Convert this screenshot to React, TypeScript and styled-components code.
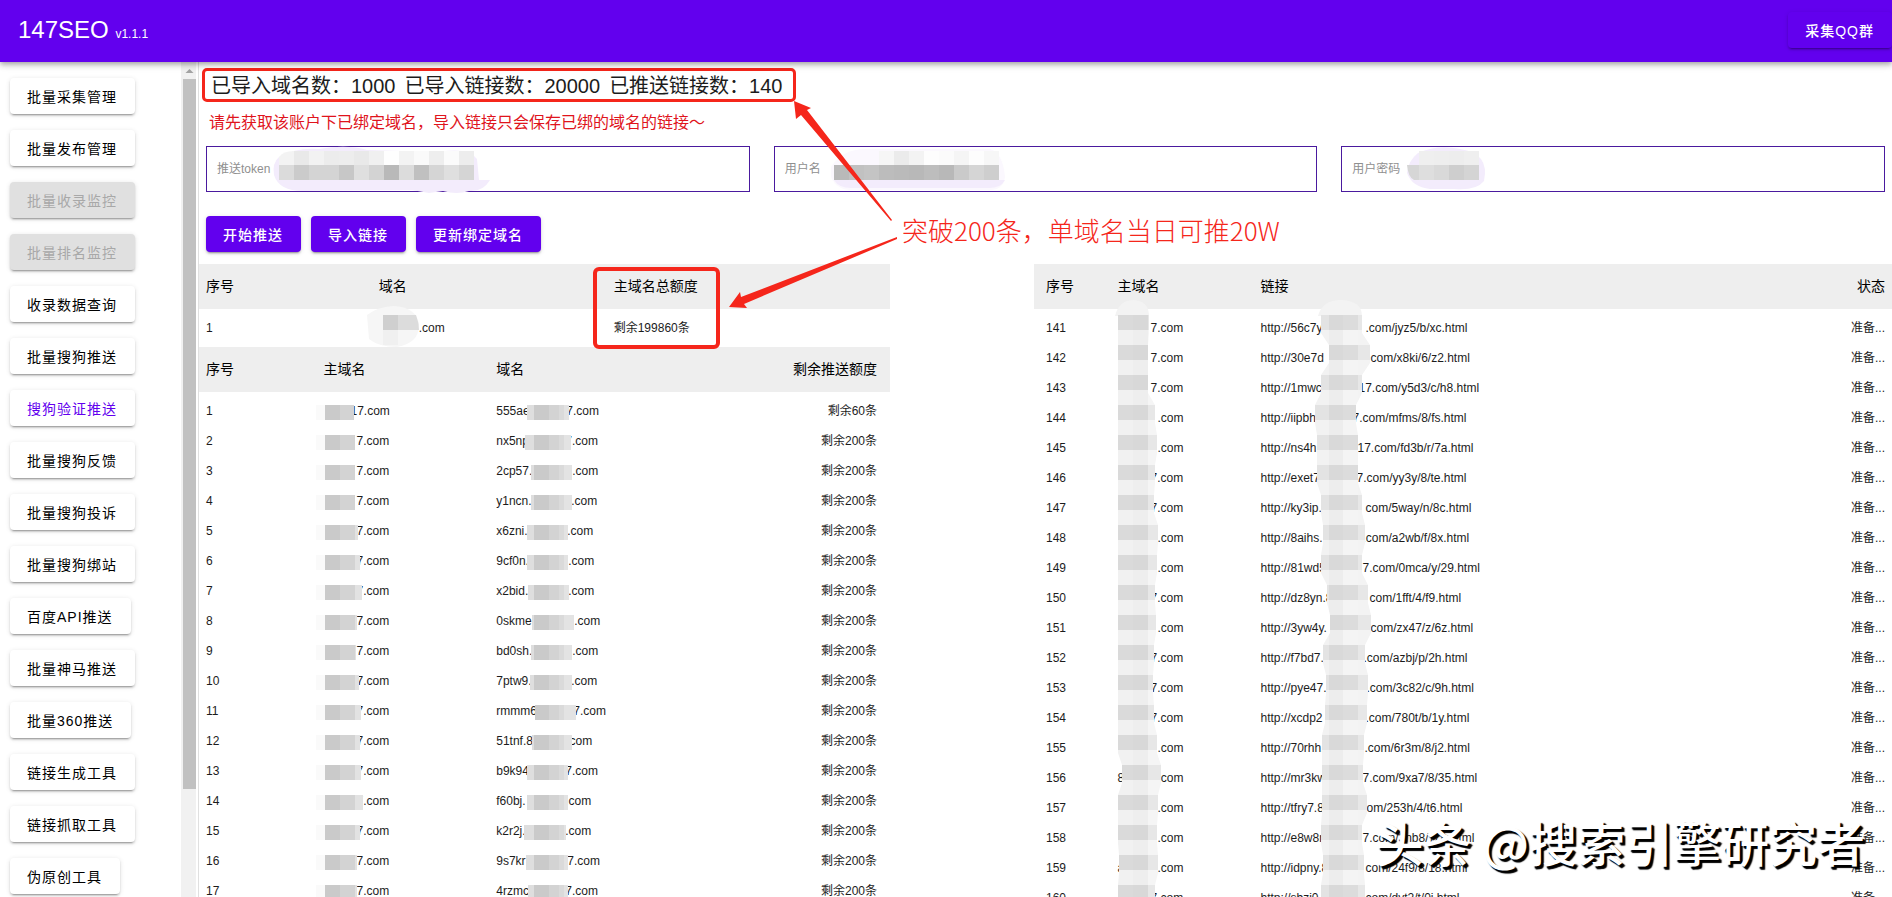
import React from 'react';
import styled, { createGlobalStyle, css } from 'styled-components';

const purple = '#6200ee';
const red = '#f5261b';
const raised =
  '0 3px 1px -2px rgba(0,0,0,.2), 0 2px 2px 0 rgba(0,0,0,.14), 0 1px 5px 0 rgba(0,0,0,.12)';

const GlobalStyle = createGlobalStyle`
  *, *::before, *::after { box-sizing: border-box; }
  body {
    margin: 0;
    background: #fff;
    color: #1c1c1c;
    font-family: "Liberation Sans", "Noto Sans CJK SC", sans-serif;
    font-size: 12px;
  }
  button, input { font-family: inherit; }
`;

const Page = styled.div`
  display: flex;
  flex-direction: column;
  height: 100vh;
  overflow: hidden;
  position: relative;
`;

const TopBar = styled.header`
  display: flex;
  align-items: center;
  justify-content: space-between;
  flex: none;
  height: 62px;
  padding: 0 0 2px 18px;
  background: ${purple};
  color: #fff;
  box-shadow: 0 2px 4px -1px rgba(0,0,0,.2), 0 4px 5px 0 rgba(0,0,0,.14), 0 1px 10px 0 rgba(0,0,0,.12);
  z-index: 3;
`;

const Brand = styled.h1`
  margin: 0;
  padding-top: 4px;
  font-size: 24px;
  font-weight: 400;
  line-height: 32px;
  small { font-size: 12px; }
`;

const Button = styled.button<{ $kind?: 'primary' | 'plain'; $active?: boolean }>`
  height: 36px;
  padding: 0 18px 1px 17px;
  border: 0;
  border-radius: 4px;
  font-size: 14px;
  letter-spacing: 1px;
  white-space: nowrap;
  background: #fff;
  color: ${(p) => (p.$active ? purple : '#000')};
  box-shadow: ${raised};
  ${(p) =>
    p.$kind === 'primary' &&
    css`
      background: ${purple};
      color: #fff;
      font-weight: 500;
    `}
  &:disabled {
    background: #e0e0e0;
    color: #a8a8a8;
  }
`;

const Body = styled.div`
  display: flex;
  flex: 1;
  min-height: 0;
`;

const Sidebar = styled.nav`
  display: flex;
  flex-direction: column;
  align-items: flex-start;
  gap: 16px;
  flex: 0 0 181px;
  padding: 16px 10px 0;
  overflow: hidden;
  ${Button} { flex: none; }
`;

const ScrollTrack = styled.div`
  display: flex;
  flex-direction: column;
  flex: 0 0 15px;
  padding-left: 2px;
  background: #f1f1f1;
`;

const ScrollArrow = styled.svg`
  flex: none;
  width: 13px;
  height: 17px;
`;

const ScrollThumb = styled.div`
  height: 85%;
  background: #c1c1c1;
`;

const Content = styled.main`
  position: relative;
  flex: 1;
  min-width: 0;
  margin-left: 2px;
  border-left: 1px solid #e0e0e0;
  overflow: hidden;
`;

const Stats = styled.h2`
  display: flex;
  gap: 9px;
  width: fit-content;
  height: 34px;
  margin: 6px 3px 7px;
  padding: 0 10px 0 6px;
  border: 3px solid ${red};
  border-radius: 5px;
  font-size: 20px;
  font-weight: 400;
  line-height: 30px;
  white-space: nowrap;
`;

const Notice = styled.p`
  margin: 0 10px 11px;
  padding-top: 2px;
  color: #e0141c;
  font-size: 16px;
  line-height: 24px;
`;

const Fields = styled.form`
  display: grid;
  grid-template-columns: repeat(3, 1fr);
  gap: 24px;
  padding: 0 7px;
`;

const Field = styled.label`
  position: relative;
  display: flex;
  align-items: center;
  gap: 8px;
  height: 46px;
  padding: 0 10px 4px;
  border: 1px solid #4a1a9e;
  color: #8f8f8f;
  white-space: nowrap;
  input {
    flex: 1;
    min-width: 0;
    border: 0;
    outline: 0;
    background: transparent;
    font-size: 12px;
  }
`;

const Actions = styled.div`
  display: flex;
  gap: 10px;
  padding: 24px 7px 12px;
`;

const Panels = styled.div`
  display: flex;
  align-items: flex-start;
`;

const QuotaPanel = styled.section`
  flex: 691;
  min-width: 0;
  margin-right: 144px;
`;

const LinkPanel = styled.section`
  flex: 858;
  min-width: 0;
`;

const Table = styled.table<{ $pad: number; $endPad: number }>`
  width: 100%;
  table-layout: fixed;
  border-collapse: collapse;
  th, td {
    padding: 0 0 0 ${(p) => p.$pad}px;
    text-align: left;
    white-space: nowrap;
  }
  th {
    height: 45px;
    padding-bottom: 4px;
    background: #eee;
    color: #000;
    font-size: 14px;
    font-weight: 400;
  }
  td { height: 30px; line-height: 30px; }
  tbody tr:first-child td { height: 34px; padding-top: 4px; }
  tbody tr:last-child td { padding-bottom: 4px; }
  .end { padding-right: ${(p) => p.$endPad}px; text-align: right; }
`;

const Redacted = styled.span`
  position: relative;
  display: flex;
  height: 30px;
`;

const Head = styled.span<{ $w: number }>`
  flex: none;
  width: ${(p) => p.$w}px;
`;

const Mask = styled.span<{ $from: number; $to: number; $tone: 'root' | 'sub' }>`
  position: absolute;
  top: 9px;
  left: ${(p) => p.$from}px;
  width: ${(p) => p.$to - p.$from}px;
  height: 15px;
  background-image: ${(p) =>
    p.$tone === 'root'
      ? 'linear-gradient(90deg, #cacaca 0 17px, #d3d3d3 17px 32px, #e2e2e2 32px)'
      : 'linear-gradient(90deg, #dedede 0 38px, #cacaca 38px 53px, #d3d3d3 53px 63px, #dadada 63px 68px, #e3e3e3 68px)'};
  background-size: 100px 15px;
  background-position: -${(p) => p.$from}px 0;
  ${(p) =>
    p.$tone === 'root' &&
    css`
      &::before {
        content: '';
        position: absolute;
        right: 100%;
        width: 9px;
        height: 15px;
        background: #fafafa;
      }
    `}
`;

const Blur = styled.svg`
  position: absolute;
  top: 0;
  left: 0;
  z-index: 1;
  overflow: visible;
  pointer-events: none;
`;

const Marks = styled.svg`
  position: absolute;
  top: 0;
  left: 0;
  z-index: 2;
  overflow: visible;
  pointer-events: none;
`;

const Callout = styled.p`
  position: absolute;
  top: 150px;
  left: 703px;
  z-index: 2;
  margin: 0;
  color: ${red};
  font-family: "Noto Sans CJK SC", sans-serif;
  font-size: 26px;
  font-weight: 300;
  line-height: 36px;
  white-space: nowrap;
`;

const Watermark = styled.div`
  position: absolute;
  right: 27px;
  bottom: 24px;
  z-index: 4;
  color: #fff;
  font-family: "Noto Sans CJK SC", sans-serif;
  font-size: 48px;
  font-weight: 500;
  line-height: 64px;
  white-space: nowrap;
  text-shadow: 2px 2px 1px #000, 3px 3px 1px #000;
`;

type NavItem = { label: string; state?: 'active' | 'disabled' };
const nav: NavItem[] = [
  { label: '批量采集管理' },
  { label: '批量发布管理' },
  { label: '批量收录监控', state: 'disabled' },
  { label: '批量排名监控', state: 'disabled' },
  { label: '收录数据查询' },
  { label: '批量搜狗推送' },
  { label: '搜狗验证推送', state: 'active' },
  { label: '批量搜狗反馈' },
  { label: '批量搜狗投诉' },
  { label: '批量搜狗绑站' },
  { label: '百度API推送' },
  { label: '批量神马推送' },
  { label: '批量360推送' },
  { label: '链接生成工具' },
  { label: '链接抓取工具' },
  { label: '伪原创工具' },
];

/* head, tail, tail start, mask start, mask end, root mask end */
type DomainRow = [string, string, number, number, number, number];
const domains: DomainRow[] = [
  ['555ae', '7.com', 70, 31, 73, 31],
  ['nx5np', '7.com', 69, 29, 75, 32],
  ['2cp57.', '.com', 76, 35, 76, 32],
  ['y1ncn.', '.com', 75, 35, 76, 32],
  ['x6zni.', '.com', 71, 31, 72, 35],
  ['9cf0n.', '.com', 72, 31, 72, 37],
  ['x2bid.', '.com', 72, 32, 73, 39],
  ['0skme', '.com', 78, 36, 78, 34],
  ['bd0sh.', '.com', 76, 35, 76, 33],
  ['7ptw9.', '.com', 75, 34, 76, 36],
  ['rmmm6', '7.com', 77, 39, 80, 38],
  ['51tnf.8', '.com', 70, 36, 76, 37],
  ['b9k94', '7.com', 69, 31, 72, 38],
  ['f60bj.', '.com', 69, 31, 72, 40],
  ['k2r2j.', '.com', 69, 28, 70, 37],
  ['9s7kr', '7.com', 71, 30, 72, 34],
  ['4rzmc', '7.com', 69, 32, 72, 34],
];

/* root head, root tail, link head, link tail, link tail start */
type LinkRow = [string, string, string, string, number];
const links: LinkRow[] = [
  ['', '7.com', 'http://56c7y.', '.com/jyz5/b/xc.html', 105],
  ['', '7.com', 'http://30e7d', 'com/x8ki/6/z2.html', 110],
  ['', '7.com', 'http://1mwc', '17.com/y5d3/c/h8.html', 98],
  ['', '.com', 'http://iipbh', '7.com/mfms/8/fs.html', 92],
  ['', '.com', 'http://ns4h', '17.com/fd3b/r/7a.html', 97],
  ['', '7.com', 'http://exet7', '7.com/yy3y/8/te.html', 96],
  ['', '7.com', 'http://ky3ip.8', 'com/5way/n/8c.html', 105],
  ['', '.com', 'http://8aihs.', '.com/a2wb/f/8x.html', 102],
  ['', '.com', 'http://81wd5', '7.com/0mca/y/29.html', 102],
  ['', '7.com', 'http://dz8yn.8', 'com/1fft/4/f9.html', 109],
  ['', '.com', 'http://3yw4y.', 'com/zx47/z/6z.html', 110],
  ['', '7.com', 'http://f7bd7.', '.com/azbj/p/2h.html', 103],
  ['', '7.com', 'http://pye47.', '.com/3c82/c/9h.html', 106],
  ['', '7.com', 'http://xcdp2', '.com/780t/b/1y.html', 105],
  ['', '.com', 'http://70rhh.', '.com/6r3m/8/j2.html', 104],
  ['8', '.com', 'http://mr3kw', '7.com/9xa7/8/35.html', 102],
  ['', '.com', 'http://tfry7.8', 'com/253h/4/t6.html', 100],
  ['', '.com', 'http://e8w8n', '7.com/3nb8/7/7r.html', 102],
  ['a', '.com', 'http://idpny.8', 'com/24f9/8/18.html', 105],
  ['', '7.com', 'http://sbzj0.', 'com/dvt2/t/0j.html', 105],
];

/* left and right edge of the blurred strip beside each row */
type Edge = [number, number];
const rootEdges: Edge[] = [
  [1, 32], [1, 31], [1, 31], [1, 38], [1, 40], [1, 38], [1, 37], [1, 41], [1, 40], [1, 38],
  [1, 39], [1, 37], [1, 36], [1, 37], [1, 40], [5, 44], [1, 41], [1, 40], [2, 41], [1, 38],
];
const linkEdges: Edge[] = [
  [61, 102], [69, 110], [61, 102], [55, 96], [57, 98], [57, 98], [61, 102], [63, 105], [61, 102], [67, 108],
  [70, 111], [63, 105], [66, 108], [65, 107], [62, 104], [62, 103], [62, 107], [61, 102], [63, 104], [61, 105],
];

type Strip = { id: string; edges: Edge[]; cuts: number[]; dark: string[]; light: string[] };

function BlurStrip({ id, edges, cuts, dark, light }: Strip) {
  const left = edges.flatMap(([l], i) => [`${l},${i * 30 + 2}`, `${l},${i * 30 + 20}`]);
  const right = edges.flatMap(([, r], i) => [`${r},${i * 30 + 2}`, `${r},${i * 30 + 20}`]);
  const [l0, r0] = edges[0];
  const cap = `M${l0 - 3},3 Q${l0 + 1},-13 ${(l0 + r0) / 2},-13 Q${r0},-12 ${r0},3 Z`;
  const side = `M${left.join(' L')} L${right.reverse().join(' L')} Z`;
  return (
    <Blur width="1" height="1" aria-hidden="true">
      <clipPath id={id}>
        <path d={side} />
      </clipPath>
      <path d={cap} fill="#f3f3f3" />
      <g clipPath={`url(#${id})`}>
        {edges.map((_, row) =>
          dark.map((tone, i) => (
            <g key={`${row}-${i}`}>
              <rect x={cuts[i]} y={row * 30 + 2} width={cuts[i + 1] - cuts[i]} height="15" fill={tone} />
              <rect x={cuts[i]} y={row * 30 + 17} width={cuts[i + 1] - cuts[i]} height="15" fill={light[i]} />
            </g>
          )),
        )}
      </g>
    </Blur>
  );
}

type Cells = { x: number; y: number; tones: string[]; h?: number };
function CellRow({ x, y, tones, h = 15 }: Cells) {
  return (
    <>
      {tones.map((t, i) => (
        <rect key={i} x={x + i * 15} y={y} width="15" height={h} fill={t} />
      ))}
    </>
  );
}

function TokenBlur() {
  return (
    <Blur width="1" height="1" aria-hidden="true">
      <path d="M72 10 Q90 0 112 2 Q140 -3 160 3 L232 5 Q262 0 270 12 L272 33 H283 Q276 45 262 44 Q250 48 236 44 L222 46 L205 43 L96 44 Q72 44 67 28 Q65 16 72 10Z" fill="#f3ecfc" />
      <path d="M72 10 Q76 4 87 4 V19 H72Z" fill="#f3f3f3" />
      <CellRow x={87} y={4} tones={['#e9e9e9', '#f2f2f2', '#ececec', '#ededed', '#e9e9e9', '#f0f0f0', '#fefefe', '#f3f3f3', '#fafafa', '#eeeeee', '#fbfbfb', '#ededed']} />
      <CellRow x={72} y={18} tones={['#dbdbdb', '#cbcbcb', '#d4d4d4', '#d4d4d4', '#c7c7c7', '#dfdfdf', '#d3d3d3', '#b9b9b9', '#dcdcdc', '#c0c0c0', '#d5d5d5', '#dfdfdf', '#d5d5d5']} />
    </Blur>
  );
}

function UserBlur() {
  return (
    <Blur width="1" height="1" aria-hidden="true">
      <path d="M56 20 Q68 2 90 2 H215 Q228 6 230 30 Q228 43 215 43 H76 Q62 43 56 30Z" fill="#fbf8fe" />
      <path d="M59 33 H230 Q226 41 214 41 H76 Q64 41 59 33Z" fill="#f3ecfc" />
      <CellRow x={104} y={4} tones={['#f6f6f6', '#ebebeb', '#f3f3f3', '#fdfdfd', '#fbfbfb', '#f5f5f5', '#fdfdfd', '#f7f7f7']} />
      <CellRow x={59} y={18} tones={['#b9b9b9', '#c1c1c1', '#c4c4c4', '#bcbcbc', '#bababa', '#b8b8b8', '#bdbdbd', '#b8b8b8', '#cacaca', '#d5d5d5', '#cecece']} />
    </Blur>
  );
}

function PasswordBlur() {
  return (
    <Blur width="1" height="1" aria-hidden="true">
      <path d="M76 6 Q96 -3 118 2 Q148 6 142 34 Q134 44 112 42 H88 Q70 40 65 26 Q66 14 76 6Z" fill="#f3ecfc" />
      <CellRow x={77} y={4} tones={['#efefef', '#eeeeee', '#ededed', '#efefef']} />
      <path d="M65 18 H77 V33 H72 Q66 30 65 18Z" fill="#d6d6d6" />
      <CellRow x={77} y={18} tones={['#dedede', '#d9d9d9', '#cecece', '#d4d4d4']} />
    </Blur>
  );
}

function RootDomainBlur() {
  return (
    <Blur width="1" height="1" aria-hidden="true">
      <path d="M-12 2 Q-2 -6 14 -7 Q38 -6 40 12 Q40 30 18 34 Q0 34 -10 26Z" fill="#f6f6f6" />
      <rect x="4" y="2" width="15" height="15" fill="#cfcfcf" />
      <path d="M19 2 H37 Q40 10 40 17 H19Z" fill="#dcdcdc" />
      <rect x="4" y="17" width="15" height="15" fill="#f0f0f0" />
    </Blur>
  );
}

const fields = [
  { id: 'token', label: '推送token', type: 'text', blur: <TokenBlur /> },
  { id: 'user', label: '用户名', type: 'text', blur: <UserBlur /> },
  { id: 'password', label: '用户密码', type: 'password', blur: <PasswordBlur /> },
];

export default function App() {
  return (
    <Page>
      <GlobalStyle />
      <TopBar>
        <Brand>
          147SEO <small>v1.1.1</small>
        </Brand>
        <Button $kind="primary">采集QQ群</Button>
      </TopBar>
      <Body>
        <Sidebar>
          {nav.map((item) => (
            <Button key={item.label} $active={item.state === 'active'} disabled={item.state === 'disabled'}>
              {item.label}
            </Button>
          ))}
        </Sidebar>
        <ScrollTrack aria-hidden="true">
          <ScrollArrow viewBox="0 0 13 17">
            <path d="M2.5 11 L6.5 7 L10.5 11Z" fill="#a3a3a3" />
          </ScrollArrow>
          <ScrollThumb />
        </ScrollTrack>
        <Content>
          <Stats>
            <span>已导入域名数：1000</span>
            <span>已导入链接数：20000</span>
            <span>已推送链接数：140</span>
          </Stats>
          <Notice>请先获取该账户下已绑定域名，导入链接只会保存已绑的域名的链接～</Notice>
          <Fields>
            {fields.map((f) => (
              <Field key={f.id} htmlFor={f.id}>
                {f.label}
                <input id={f.id} type={f.type} />
                {f.blur}
              </Field>
            ))}
          </Fields>
          <Actions>
            <Button $kind="primary">开始推送</Button>
            <Button $kind="primary">导入链接</Button>
            <Button $kind="primary">更新绑定域名</Button>
          </Actions>
          <Panels>
            <QuotaPanel>
              <Table $pad={7} $endPad={13}>
                <colgroup>
                  <col style={{ width: '25%' }} />
                  <col style={{ width: '34%' }} />
                  <col />
                </colgroup>
                <thead>
                  <tr>
                    <th>序号</th>
                    <th>域名</th>
                    <th>主域名总额度</th>
                  </tr>
                </thead>
                <tbody>
                  <tr>
                    <td>1</td>
                    <td>
                      <Redacted>
                        <Head $w={40} />
                        .com
                        <RootDomainBlur />
                      </Redacted>
                    </td>
                    <td>剩余199860条</td>
                  </tr>
                </tbody>
              </Table>
              <Table $pad={7} $endPad={13}>
                <colgroup>
                  <col style={{ width: '17%' }} />
                  <col style={{ width: '25%' }} />
                  <col />
                  <col style={{ width: '25%' }} />
                </colgroup>
                <thead>
                  <tr>
                    <th>序号</th>
                    <th>主域名</th>
                    <th>域名</th>
                    <th className="end">剩余推送额度</th>
                  </tr>
                </thead>
                <tbody>
                  {domains.map(([head, tail, at, from, to, rootTo], i) => (
                    <tr key={head}>
                      <td>{i + 1}</td>
                      <td>
                        <Redacted>
                          <Head $w={i === 0 ? 27 : 33} />
                          {i === 0 ? '17.com' : '7.com'}
                          <Mask $tone="root" $from={2} $to={rootTo} />
                        </Redacted>
                      </td>
                      <td>
                        <Redacted>
                          <Head $w={at}>{head}</Head>
                          {tail}
                          <Mask $tone="sub" $from={from} $to={to} />
                        </Redacted>
                      </td>
                      <td className="end">{i === 0 ? '剩余60条' : '剩余200条'}</td>
                    </tr>
                  ))}
                </tbody>
              </Table>
            </QuotaPanel>
            <LinkPanel>
              <Table $pad={12} $endPad={7}>
                <colgroup>
                  <col style={{ width: 'calc(100% / 12)' }} />
                  <col style={{ width: 'calc(100% / 6)' }} />
                  <col />
                  <col style={{ width: 'calc(100% / 12)' }} />
                </colgroup>
                <thead>
                  <tr>
                    <th>序号</th>
                    <th>主域名</th>
                    <th>链接</th>
                    <th className="end">状态</th>
                  </tr>
                </thead>
                <tbody>
                  {links.map(([rootHead, rootTail, head, tail, at], i) => (
                    <tr key={head}>
                      <td>{141 + i}</td>
                      <td>
                        <Redacted>
                          <Head $w={rootTail === '7.com' ? 33 : 40}>{rootHead}</Head>
                          {rootTail}
                          {i === 0 && (
                            <BlurStrip
                              id="root-strip"
                              edges={rootEdges}
                              cuts={[0, 16, 31, 50]}
                              dark={['#dadada', '#d8d8d8', '#e7e7e7']}
                              light={['#f1f1f1', '#eeeeee', '#f5f5f5']}
                            />
                          )}
                        </Redacted>
                      </td>
                      <td>
                        <Redacted>
                          <Head $w={at}>{head}</Head>
                          {tail}
                          {i === 0 && (
                            <BlurStrip
                              id="link-strip"
                              edges={linkEdges}
                              cuts={[50, 69, 83, 98, 115]}
                              dark={['#e3e3e3', '#d9d9d9', '#dcdcdc', '#e7e7e7']}
                              light={['#f2f2f2', '#ededed', '#f4f4f4', '#f3f3f3']}
                            />
                          )}
                        </Redacted>
                      </td>
                      <td className="end">准备...</td>
                    </tr>
                  ))}
                </tbody>
              </Table>
            </LinkPanel>
          </Panels>
          <Marks width="1" height="1" aria-hidden="true">
            <rect x="396" y="207" width="123" height="78" rx="4" fill="none" stroke={red} strokeWidth="4" />
            <path d="M595 39 L612 46 L608 48 L693 158 L692 159 L602 53 L597 57Z" fill={red} />
            <path d="M530 245 L541 230 L542 235 L698 175 L698 177 L545 242 L548 246Z" fill={red} />
          </Marks>
          <Callout>突破200条，单域名当日可推20W</Callout>
        </Content>
      </Body>
      <Watermark>头条 @搜索引擎研究者</Watermark>
    </Page>
  );
}
